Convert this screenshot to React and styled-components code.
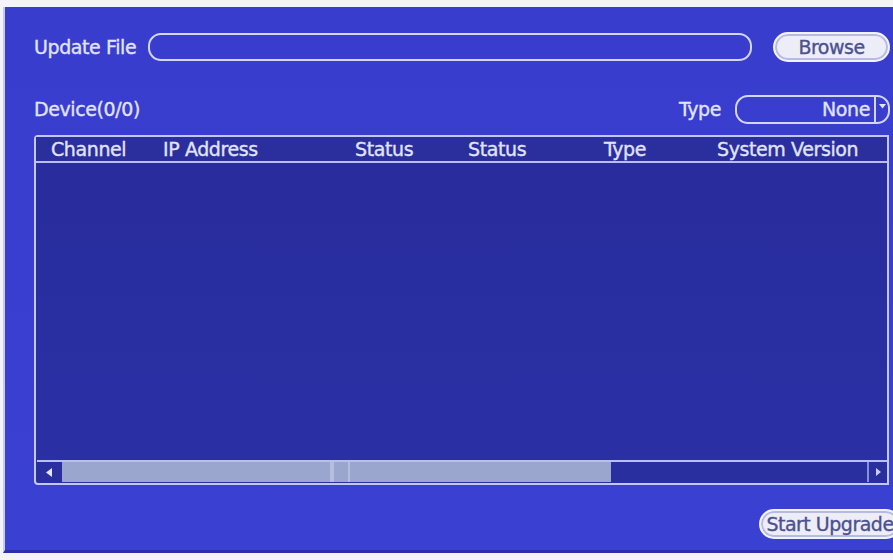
import styled, { createGlobalStyle } from 'styled-components';

const GlobalStyle = createGlobalStyle`
  html, body {
    margin: 0;
    padding: 0;
    background: #f4f4f8;
    overflow: hidden;
  }
  body {
    font-family: "DejaVu Sans", "Liberation Sans", sans-serif;
    -webkit-text-stroke: 0.35px currentColor;
  }
`;

const columns = [
  { title: 'Channel', width: 112 },
  { title: 'IP Address', width: 192 },
  { title: 'Status', width: 113 },
  { title: 'Status', width: 136 },
  { title: 'Type', width: 113 },
  { title: 'System Version', width: 180 },
];

export default function App () {
  return (
    <>
      <GlobalStyle />
      <Panel>
        <Row>
          <Label>Update File</Label>
          <FileInput />
          <PillButton width={117} $offset={21}>Browse</PillButton>
        </Row>

        <Row $gap={34}>
          <Label>Device(0/0)</Label>
          <Spacer />
          <Label>Type</Label>
          <Select>
            <SelectValue>None</SelectValue>
            <SelectArrow>
              <svg width='7' height='5' viewBox='0 0 7 5'>
                <path d='M0 0 L7 0 L3.5 4.5 Z' fill='#e4e7fb' />
              </svg>
            </SelectArrow>
          </Select>
        </Row>

        <Table>
          <HeaderRow>
            {columns.map((c, i) => (
              <HeaderCell key={i} width={c.width}>{c.title}</HeaderCell>
            ))}
          </HeaderRow>
          <TableBody />
          <ScrollBar>
            <ScrollArrow>
              <svg width='6' height='9' viewBox='0 0 6 9'>
                <path d='M6 0 L6 9 L0 4.5 Z' fill='#e4e7fb' />
              </svg>
            </ScrollArrow>
            <ScrollThumb>
              <Grip />
            </ScrollThumb>
            <ScrollTrack />
            <ScrollArrow $right>
              <svg width='5' height='8' viewBox='0 0 5 8'>
                <path d='M0 0 L0 8 L5 4 Z' fill='#c9cff2' />
              </svg>
            </ScrollArrow>
          </ScrollBar>
        </Table>

        <Footer>
          <PillButton width={142}>Start Upgrade</PillButton>
        </Footer>
      </Panel>
    </>
  );
}

const Panel = styled.div`
  margin: 7px 0 0 3px;
  height: 546px;
  box-sizing: border-box;
  padding: 26px 0 0 29px;
  display: flex;
  flex-direction: column;
  background: linear-gradient(180deg, #393dce 0%, #3a40d2 100%);
  border-left: 2px solid #c8cbe6;
  border-bottom: 3px solid #2c30a8;
  overflow: hidden;
  color: #e1e4f9;
`;

const Row = styled.div`
  display: flex;
  align-items: center;
  height: 28px;
  margin-top: ${props => props.$gap || 0}px;
  padding-right: 3px;
`;

const Label = styled.span`
  font-size: 19px;
  white-space: nowrap;
  letter-spacing: -0.4px;
`;

const Spacer = styled.div`
  flex: 1;
`;

const FileInput = styled.div`
  flex: 1;
  height: 28px;
  margin-left: 12px;
  box-sizing: border-box;
  border: 2px solid #d3d6f6;
  border-radius: 13px;
`;

const PillButton = styled.div`
  width: ${props => props.width}px;
  flex-shrink: 0;
  height: 30px;
  margin-left: ${props => props.$offset || 0}px;
  box-sizing: border-box;
  border: 2px solid #f2f2fa;
  box-shadow: inset 0 0 0 2px #b8bbe0;
  border-radius: 15px;
  background: #ecedf6;
  color: #4b5090;
  font-size: 19px;
  letter-spacing: -0.5px;
  white-space: nowrap;
  display: flex;
  align-items: center;
  justify-content: center;
`;

const Select = styled.div`
  width: 155px;
  height: 29px;
  margin-left: 14px;
  box-sizing: border-box;
  border: 2px solid #d3d6f6;
  border-radius: 13px;
  display: flex;
  align-items: center;
  justify-content: flex-end;
`;

const SelectValue = styled.span`
  font-size: 19px;
  letter-spacing: -0.4px;
  padding-right: 4px;
`;

const SelectArrow = styled.div`
  height: 100%;
  width: 14px;
  border-left: 2px solid #d3d6f6;
  display: flex;
  align-items: center;
  justify-content: center;
  padding-bottom: 6px;
  box-sizing: border-box;
`;

const Table = styled.div`
  margin-top: 12px;
  width: 855px;
  height: 350px;
  box-sizing: border-box;
  border: 2px solid #c3c8f3;
  border-radius: 4px 0 0 4px;
  background: #2a2fa1;
  display: flex;
  flex-direction: column;
`;

const HeaderRow = styled.div`
  display: flex;
  height: 24px;
  padding-left: 15px;
  align-items: center;
  border-bottom: 2px solid #b9c0f0;
  background: #2b2f9e;
`;

const HeaderCell = styled.div`
  width: ${props => props.width}px;
  flex-shrink: 0;
  font-size: 19px;
  white-space: nowrap;
  letter-spacing: -0.4px;
`;

const TableBody = styled.div`
  flex: 1;
  background: linear-gradient(180deg, #282c9c 0%, #2a30a4 100%);
`;

const ScrollBar = styled.div`
  height: 20px;
  margin: 0 0 1px 1px;
  display: flex;
  border-top: 2px solid #b9c0f0;
  background: #2a2f9f;
`;

const ScrollArrow = styled.div`
  width: ${props => props.$right ? 18 : 23}px;
  flex-shrink: 0;
  background: #2a2f9f;
  border-left: ${props => props.$right ? '2px solid #8890d8' : 'none'};
  display: flex;
  align-items: center;
  justify-content: center;
`;

const ScrollThumb = styled.div`
  width: 549px;
  margin-left: 2px;
  background: #9ba6cf;
  position: relative;
`;

const Grip = styled.div`
  position: absolute;
  left: 268px;
  top: 0;
  bottom: 0;
  width: 16px;
  border-left: 2px solid #b6bedf;
  border-right: 2px solid #b6bedf;
  box-shadow: inset 5px 0 0 -3px #b6bedf;
`;

const ScrollTrack = styled.div`
  flex: 1;
  background: #2a2f9f;
`;

const Footer = styled.div`
  display: flex;
  justify-content: flex-end;
  margin-top: 24px;
  margin-right: -8px;
`;
